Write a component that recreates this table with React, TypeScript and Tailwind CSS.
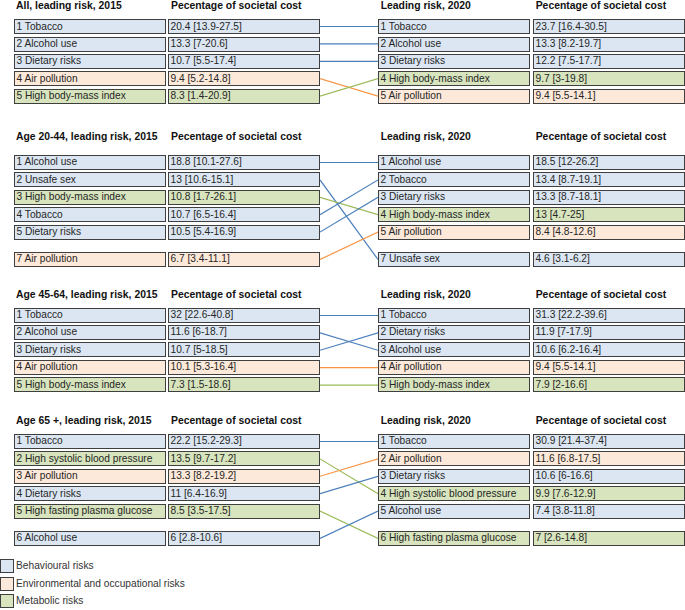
import React from "react";

type Cat = "B" | "E" | "M";
type Row = { label: string; value: string; cat: Cat; gap?: boolean };
type Line = { from: number; to: number; cat: Cat };

const BG: Record<Cat, string> = {
  B: "bg-[#dce6f2]",
  E: "bg-[#fde9d9]",
  M: "bg-[#d7e4bd]",
};
const STROKE: Record<Cat, string> = {
  B: "#4a7ebb",
  E: "#f79646",
  M: "#9bbb59",
};

const PITCH = 17.4;
const BOX_H = 15;
const GAP_SLOT = 97;

function slotCenter(i: number) {
  return (i < 5 ? i * PITCH : GAP_SLOT) + BOX_H / 2;
}

function Box({ text, cat }: { text: string; cat: Cat }) {
  return (
    <div
      className={`h-[15px] w-[152px] border-[1.5px] border-[#3f3f3f] ${BG[cat]} flex items-center pl-[1.5px] text-[10.2px] leading-none text-[#262626] whitespace-nowrap overflow-hidden`}
    >
      {text}
    </div>
  );
}

function Table({ rows, gapX }: { rows: Row[]; gapX: string }) {
  return (
    <div className="flex flex-col gap-[2.4px]">
      {rows.map((r, i) => (
        <div key={i} className={`flex ${gapX} ${r.gap ? "mt-[10px]" : ""}`}>
          <Box text={r.label} cat={r.cat} />
          <Box text={r.value} cat={r.cat} />
        </div>
      ))}
    </div>
  );
}

function Section({
  leftTitle,
  left,
  right,
  lines,
  mt,
  bodyMt,
}: {
  leftTitle: string;
  left: Row[];
  right: Row[];
  lines: Line[];
  mt: string;
  bodyMt: string;
}) {
  const h = left.length > 5 ? GAP_SLOT + BOX_H : 4 * PITCH + BOX_H;
  return (
    <div className={mt}>
      <div className="flex h-[11px] items-center text-[10.4px] font-bold leading-[11px] text-[#111] whitespace-nowrap">
        <div className="ml-[14px] w-[152px] pl-[2px]">{leftTitle}</div>
        <div className="ml-[2px] w-[152px] pl-[3px]">Pecentage of societal cost</div>
        <div className="w-[58px]" />
        <div className="w-[152px] pl-[2.7px]">Leading risk, 2020</div>
        <div className="ml-[3px] w-[152px] pl-[2.7px]">Pecentage of societal cost</div>
      </div>
      <div className={`flex ${bodyMt}`}>
        <div className="ml-[14px]">
          <Table rows={left} gapX="gap-[2px]" />
        </div>
        <svg width={58} height={h} viewBox={`0 0 58 ${h}`} className="shrink-0">
          {lines.map((l, i) => (
            <line
              key={i}
              x1={0}
              y1={slotCenter(l.from)}
              x2={58}
              y2={slotCenter(l.to)}
              stroke={STROKE[l.cat]}
              strokeWidth={1.2}
            />
          ))}
        </svg>
        <div>
          <Table rows={right} gapX="gap-[3px]" />
        </div>
      </div>
    </div>
  );
}

export default function App() {
  return (
    <div
      className="relative w-[685px] h-[610px] overflow-hidden bg-white"
      style={{ fontFamily: '"Liberation Sans", Arial, sans-serif' }}
    >
      <Section
        mt="mt-0"
        bodyMt="mt-[8.3px]"
        leftTitle="All, leading risk, 2015"
        left={[
          { label: "1 Tobacco", value: "20.4 [13.9-27.5]", cat: "B" },
          { label: "2 Alcohol use", value: "13.3 [7-20.6]", cat: "B" },
          { label: "3 Dietary risks", value: "10.7 [5.5-17.4]", cat: "B" },
          { label: "4 Air pollution", value: "9.4 [5.2-14.8]", cat: "E" },
          { label: "5 High body-mass index", value: "8.3 [1.4-20.9]", cat: "M" },
        ]}
        right={[
          { label: "1 Tobacco", value: "23.7 [16.4-30.5]", cat: "B" },
          { label: "2 Alcohol use", value: "13.3 [8.2-19.7]", cat: "B" },
          { label: "3 Dietary risks", value: "12.2 [7.5-17.7]", cat: "B" },
          { label: "4 High body-mass index", value: "9.7 [3-19.8]", cat: "M" },
          { label: "5 Air pollution", value: "9.4 [5.5-14.1]", cat: "E" },
        ]}
        lines={[
          { from: 0, to: 0, cat: "B" },
          { from: 1, to: 1, cat: "B" },
          { from: 2, to: 2, cat: "B" },
          { from: 3, to: 4, cat: "E" },
          { from: 4, to: 3, cat: "M" },
        ]}
      />
      <Section
        mt="mt-[27.3px]"
        bodyMt="mt-[12.8px]"
        leftTitle="Age 20-44, leading risk, 2015"
        left={[
          { label: "1 Alcohol use", value: "18.8 [10.1-27.6]", cat: "B" },
          { label: "2 Unsafe sex", value: "13 [10.6-15.1]", cat: "B" },
          { label: "3 High body-mass index", value: "10.8 [1.7-26.1]", cat: "M" },
          { label: "4 Tobacco", value: "10.7 [6.5-16.4]", cat: "B" },
          { label: "5 Dietary risks", value: "10.5 [5.4-16.9]", cat: "B" },
          { label: "7 Air pollution", value: "6.7 [3.4-11.1]", cat: "E", gap: true },
        ]}
        right={[
          { label: "1 Alcohol use", value: "18.5 [12-26.2]", cat: "B" },
          { label: "2 Tobacco", value: "13.4 [8.7-19.1]", cat: "B" },
          { label: "3 Dietary risks", value: "13.3 [8.7-18.1]", cat: "B" },
          { label: "4 High body-mass index", value: "13 [4.7-25]", cat: "M" },
          { label: "5 Air pollution", value: "8.4 [4.8-12.6]", cat: "E" },
          { label: "7 Unsafe sex", value: "4.6 [3.1-6.2]", cat: "B", gap: true },
        ]}
        lines={[
          { from: 0, to: 0, cat: "B" },
          { from: 1, to: 5, cat: "B" },
          { from: 2, to: 3, cat: "M" },
          { from: 3, to: 1, cat: "B" },
          { from: 4, to: 2, cat: "B" },
          { from: 5, to: 4, cat: "E" },
        ]}
      />
      <Section
        mt="mt-[22.5px]"
        bodyMt="mt-[7.2px]"
        leftTitle="Age 45-64, leading risk, 2015"
        left={[
          { label: "1 Tobacco", value: "32 [22.6-40.8]", cat: "B" },
          { label: "2 Alcohol use", value: "11.6 [6-18.7]", cat: "B" },
          { label: "3 Dietary risks", value: "10.7 [5-18.5]", cat: "B" },
          { label: "4 Air pollution", value: "10.1 [5.3-16.4]", cat: "E" },
          { label: "5 High body-mass index", value: "7.3 [1.5-18.6]", cat: "M" },
        ]}
        right={[
          { label: "1 Tobacco", value: "31.3 [22.2-39.6]", cat: "B" },
          { label: "2 Dietary risks", value: "11.9 [7-17.9]", cat: "B" },
          { label: "3 Alcohol use", value: "10.6 [6.2-16.4]", cat: "B" },
          { label: "4 Air pollution", value: "9.4 [5.5-14.1]", cat: "E" },
          { label: "5 High body-mass index", value: "7.9 [2-16.6]", cat: "M" },
        ]}
        lines={[
          { from: 0, to: 0, cat: "B" },
          { from: 1, to: 2, cat: "B" },
          { from: 2, to: 1, cat: "B" },
          { from: 3, to: 3, cat: "E" },
          { from: 4, to: 4, cat: "M" },
        ]}
      />
      <Section
        mt="mt-[22.7px]"
        bodyMt="mt-[8px]"
        leftTitle="Age 65 +, leading risk, 2015"
        left={[
          { label: "1 Tobacco", value: "22.2 [15.2-29.3]", cat: "B" },
          { label: "2 High systolic blood pressure", value: "13.5 [9.7-17.2]", cat: "M" },
          { label: "3 Air pollution", value: "13.3 [8.2-19.2]", cat: "E" },
          { label: "4 Dietary risks", value: "11 [6.4-16.9]", cat: "B" },
          { label: "5 High fasting plasma glucose", value: "8.5 [3.5-17.5]", cat: "M" },
          { label: "6 Alcohol use", value: "6 [2.8-10.6]", cat: "B", gap: true },
        ]}
        right={[
          { label: "1 Tobacco", value: "30.9 [21.4-37.4]", cat: "B" },
          { label: "2 Air pollution", value: "11.6 [6.8-17.5]", cat: "E" },
          { label: "3 Dietary risks", value: "10.6 [6-16.6]", cat: "B" },
          { label: "4 High systolic blood pressure", value: "9.9 [7.6-12.9]", cat: "M" },
          { label: "5 Alcohol use", value: "7.4 [3.8-11.8]", cat: "B" },
          { label: "6 High fasting plasma glucose", value: "7 [2.6-14.8]", cat: "M", gap: true },
        ]}
        lines={[
          { from: 0, to: 0, cat: "B" },
          { from: 1, to: 3, cat: "M" },
          { from: 2, to: 1, cat: "E" },
          { from: 3, to: 2, cat: "B" },
          { from: 4, to: 5, cat: "M" },
          { from: 5, to: 4, cat: "B" },
        ]}
      />
      <div className="mt-[13.3px] flex flex-col gap-[3.4px]">
        {[
          { t: "Behavioural risks", c: "B" as Cat },
          { t: "Environmental and occupational risks", c: "E" as Cat },
          { t: "Metabolic risks", c: "M" as Cat },
        ].map((l) => (
          <div key={l.t} className="flex items-center h-[14px]">
            <div className={`h-[14px] w-[14px] border-[1.5px] border-[#3f3f3f] ${BG[l.c]}`} />
            <span className="ml-[2px] text-[10.2px] leading-none text-[#333] whitespace-nowrap">{l.t}</span>
          </div>
        ))}
      </div>
    </div>
  );
}
